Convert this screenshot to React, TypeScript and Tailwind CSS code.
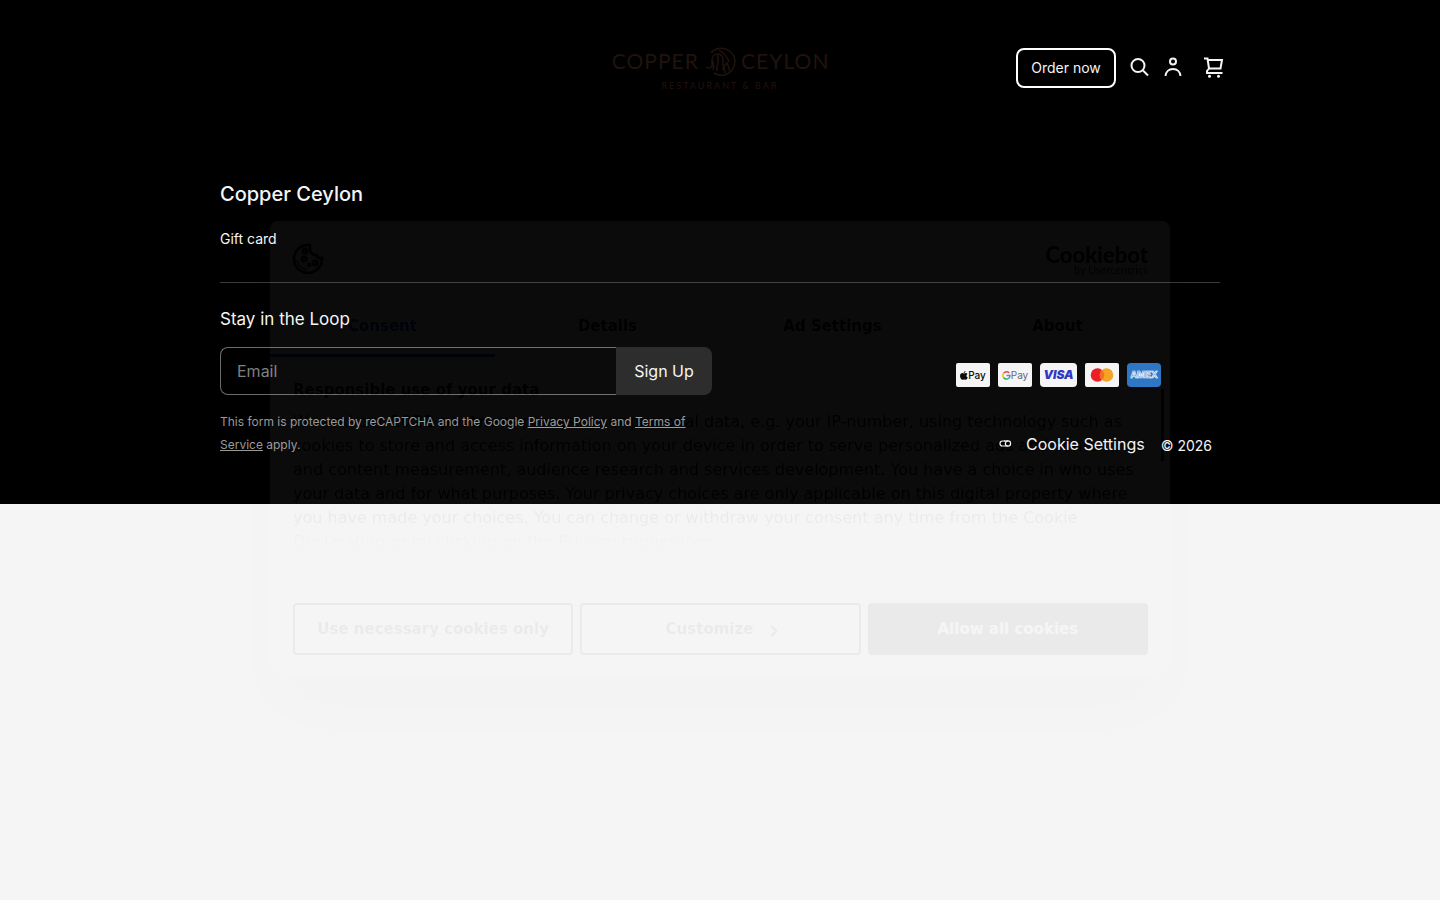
import type { ReactNode } from 'react';
import { ChevronRight } from 'lucide-react';

const tabs = ['Consent', 'Details', 'Ad Settings', 'About'];

const iconProps = {
  width: 24,
  height: 24,
  viewBox: '0 0 24 24',
  fill: 'none',
  stroke: 'currentColor',
  strokeWidth: 2,
};

function Logo() {
  return (
    <a href="/" aria-label="Copper Ceylon" className="flex flex-col items-center pt-px text-[#20130e] font-['Lato',sans-serif]">
      <span className="flex items-center gap-1">
        <span className="w-[92px] text-right text-[21px] leading-8 tracking-wider">COPPER</span>
        <svg width="34" height="32" viewBox="0 0 34 32" fill="none" stroke="currentColor" strokeWidth="1.5">
          <path d="M8 8a13.500 13.500 0 1 1 3 20" />
          <path d="M3 22c3 2 6 1 6-2v-5c0-4 3-6 6-6 4 0 5 3 5 7v4c0 3 2 4 2 8M9 15c2 3 2 6 1 10M15 10v7c0 3-2 4-1 9M20 25c0-3 2-5 4-7 1 3 3 5 2 8M16 5c4 3 9 6 10 12" />
        </svg>
        <span className="w-[92px] text-[21px] leading-8 tracking-wider">CEYLON</span>
      </span>
      <span className="text-[9px] leading-[18px] tracking-[2px]">RESTAURANT &amp; BAR</span>
    </a>
  );
}

function Header() {
  return (
    <header className="grid grid-cols-[1fr_auto_1fr] items-start px-[215px] pt-11">
      <div />
      <Logo />
      <div className="flex items-center justify-end pt-1">
        <button className="mr-3 h-10 w-[100px] rounded-lg border-2 border-white text-sm">Order now</button>
        <button aria-label="Search" className="mr-[9px]">
          <svg {...iconProps}>
            <circle cx="10" cy="9.500" r="6.500" />
            <path d="M15 14.500l5 5" />
          </svg>
        </button>
        <button aria-label="Account" className="mr-4">
          <svg {...iconProps}>
            <circle cx="12" cy="5.500" r="3" />
            <path d="M4.500 20c.3-4.300 3.300-7 7.500-7s7.200 2.700 7.500 7" />
          </svg>
        </button>
        <button aria-label="Cart">
          <svg {...iconProps}>
            <path d="M3 2.500h3.500l1.500 10h11.500l1.500-8.500H6.700M8 12.500L6 15v2h15.500" />
            <circle cx="8.500" cy="20.300" r="1.500" fill="currentColor" stroke="none" />
            <circle cx="17.500" cy="20.300" r="1.500" fill="currentColor" stroke="none" />
          </svg>
        </button>
      </div>
    </header>
  );
}

function PayCard({ label, className, children }: { label: string; className: string; children: ReactNode }) {
  return (
    <li aria-label={label} className={`flex h-6 items-center justify-center ${className}`}>
      {children}
    </li>
  );
}

function Payments() {
  return (
    <ul className="flex gap-2">
      <PayCard label="Apple Pay" className="w-[34px] rounded-xs bg-[#f5f5f5] text-[10px] font-medium text-black">
        <svg width="8" height="9" viewBox="0 0 16 18" fill="currentColor">
          <path d="M11 0c0 2-1.500 4-3.500 4C7.300 2 9 .3 11 0zM8 5c1 0 2-1 3.600-1 1.400 0 2.600.7 3.400 1.800-3 1.800-2.500 6 .6 7.200-.8 2-2.300 4.700-4 4.700-1.300 0-1.800-.8-3.400-.8s-2.200.8-3.400.8C2.500 17.700 0 13.500 0 10c0-3.600 2.300-5.800 4.600-5.800C6 4.200 7 5 8 5z" />
        </svg>
        Pay
      </PayCard>
      <PayCard label="Google Pay" className="w-[34px] rounded-xs bg-[#f5f5f5] text-[10px] text-[#5f6368]">
        <svg width="9" height="9" viewBox="0 0 18 18" fill="none" strokeWidth="3">
          <path d="M14.500 4A7 7 0 0 0 3 5" stroke="#ea4335" />
          <path d="M3 5a7 7 0 0 0 0 8" stroke="#fbbc04" />
          <path d="M3 13a7 7 0 0 0 10.500 1.500" stroke="#34a853" />
          <path d="M9 9h7a7 7 0 0 1-2.500 5.500" stroke="#4285f4" />
        </svg>
        Pay
      </PayCard>
      <PayCard label="Visa" className="w-[37px] rounded-sm bg-[#f5f5f5] text-xs font-black text-[#2a2fc4] italic">
        VISA
      </PayCard>
      <PayCard label="Mastercard" className="w-[34px] rounded-xs bg-[#f5f5f5]">
        <svg width="24" height="14" viewBox="0 0 24 14">
          <circle cx="7.500" cy="7" r="6.800" fill="#eb1420" />
          <circle cx="16.500" cy="7" r="6.800" fill="#f3a01b" />
          <path d="M12 1.900a6.800 6.800 0 0 1 0 10.200a6.800 6.800 0 0 1 0-10.200z" fill="#f26a1a" />
        </svg>
      </PayCard>
      <PayCard label="American Express" className="w-[34px] rounded-sm bg-[#2671c2]">
        <svg width="30" height="10" viewBox="0 0 30 10">
          <text x="15" y="8.200" textAnchor="middle" fontFamily="Inter, sans-serif" fontSize="9" fontWeight="700" fill="#2671c2" stroke="#fff" strokeWidth=".7">
            AMEX
          </text>
        </svg>
      </PayCard>
    </ul>
  );
}

function Footer() {
  return (
    <footer className="mx-auto max-w-[1000px] pt-[85px] pb-12">
      <h2 className="text-xl leading-7 font-medium">Copper Ceylon</h2>
      <a href="/gift-card" className="mt-5 block text-sm leading-[22px]">Gift card</a>
      <hr className="mt-8 border-[#3b3b3b]" />
      <div className="flex items-start justify-between pt-6">
        <div className="w-[492px]">
          <label htmlFor="email" className="block text-[17px] leading-6">Stay in the Loop</label>
          <form className="mt-4 flex h-12">
            <input
              id="email"
              type="email"
              placeholder="Email"
              className="min-w-0 flex-1 rounded-l-lg border border-r-0 border-[#6b6b6b] px-4 text-base placeholder:text-[#808080]"
            />
            <button type="button" className="w-24 rounded-r-lg bg-[#242424] text-base">Sign Up</button>
          </form>
          <p className="mt-[15px] text-xs leading-[23px] text-[#999]">
            This form is protected by reCAPTCHA and the Google{' '}
            <a href="/privacy" className="underline">Privacy Policy</a> and{' '}
            <a href="/terms" className="underline">Terms of Service</a> apply.
          </p>
        </div>
        <div className="flex flex-col items-end pt-14 pr-2">
          <div className="pr-[51px]">
            <Payments />
          </div>
          <div className="mt-[45px] flex items-end gap-4">
            <a href="/cookies" className="flex items-center gap-3.5 text-base">
              <svg width="13" height="8" viewBox="0 0 13 8" fill="none" stroke="currentColor" strokeWidth="1.200">
                <path d="M6 1H3.500a2.500 2.500 0 0 0 0 5H9" />
                <circle cx="9" cy="3.500" r="2.600" />
                <path d="M5 1h4" />
              </svg>
              Cookie Settings
            </a>
            <span className="text-sm">© 2026</span>
          </div>
        </div>
      </div>
    </footer>
  );
}

function CookieDialog() {
  return (
    <div
      role="dialog"
      aria-label="Cookie consent"
      className="fixed top-1/2 left-1/2 w-[900px] max-w-full -translate-x-1/2 -translate-y-1/2 rounded-lg bg-white text-[15px] leading-6 text-[#141414] opacity-[0.047] shadow-[0_32px_68px_rgba(0,0,0,0.3)] font-['DejaVu_Sans',sans-serif]"
    >
      <div className="flex h-[76px] items-center justify-between px-[22px]">
        <svg width="32" height="32" viewBox="0 0 32 32" fill="none" stroke="currentColor" strokeWidth="2.800">
          <path d="M18 2A14 14 0 1 0 30 15c-3 .5-5-.5-5.500-3C20 12.500 17 9 18 2z" />
          <path d="M5 17c1 6 5 9 10 9.500" strokeWidth="1.500" />
          <circle cx="13" cy="8" r="2" />
          <circle cx="12" cy="16" r="2.200" />
          <circle cx="23" cy="20" r="2.200" />
          <circle cx="17" cy="22" r="1" />
        </svg>
        <div className="text-right font-['Lato',sans-serif]">
          <div className="text-[22px] leading-[22px] font-black">Cookiebot</div>
          <div className="text-[11px] leading-2">by Usercentrics</div>
        </div>
      </div>
      <div role="tablist" className="grid grid-cols-4">
        {tabs.map((tab, i) => (
          <button
            key={tab}
            role="tab"
            aria-selected={i === 0}
            className={`h-[60px] border-b-3 font-bold ${i === 0 ? 'border-[#1032cf] text-[#1032cf]' : 'border-transparent'}`}
          >
            {tab}
          </button>
        ))}
      </div>
      <div className="relative h-[202px] overflow-hidden px-[23px] pt-[21px]">
        <h2 className="font-bold">Responsible use of your data</h2>
        <p className="mt-2 text-base">
          We and our <a href="/partners" className="font-bold">1022 partners</a> process your personal data, e.g. your
          IP-number, using technology such as cookies to store and access information on your device in order to serve
          personalized ads and content, ad and content measurement, audience research and services development. You
          have a choice in who uses your data and for what purposes. Your privacy choices are only applicable on this
          digital property where you have made your choices. You can change or withdraw your consent any time from the
          Cookie Declaration or by clicking on the Privacy trigger icon.
        </p>
        <div className="absolute inset-x-0 bottom-0 h-10 bg-linear-to-t from-white from-20% to-transparent" />
        <div className="absolute top-8 right-1.5 h-[72px] w-[3px] bg-[#141414]" />
      </div>
      <div className="grid grid-cols-3 gap-[7px] pt-11 pr-[22px] pb-6 pl-[23px] font-bold">
        <button className="h-[52px] rounded-sm border-2 border-current">Use necessary cookies only</button>
        <button className="flex h-[52px] items-center justify-center gap-3 rounded-sm border-2 border-current pl-2">
          Customize
          <ChevronRight size={18} strokeWidth={3} className="mt-1" />
        </button>
        <button className="h-[52px] rounded-sm bg-[#141414] text-white">Allow all cookies</button>
      </div>
    </div>
  );
}

export default function App() {
  return (
    <div className="min-h-screen bg-[#f5f5f5] font-['Inter',sans-serif]">
      <div className="bg-black text-[#f5f5f5]">
        <Header />
        <Footer />
      </div>
      <CookieDialog />
    </div>
  );
}
